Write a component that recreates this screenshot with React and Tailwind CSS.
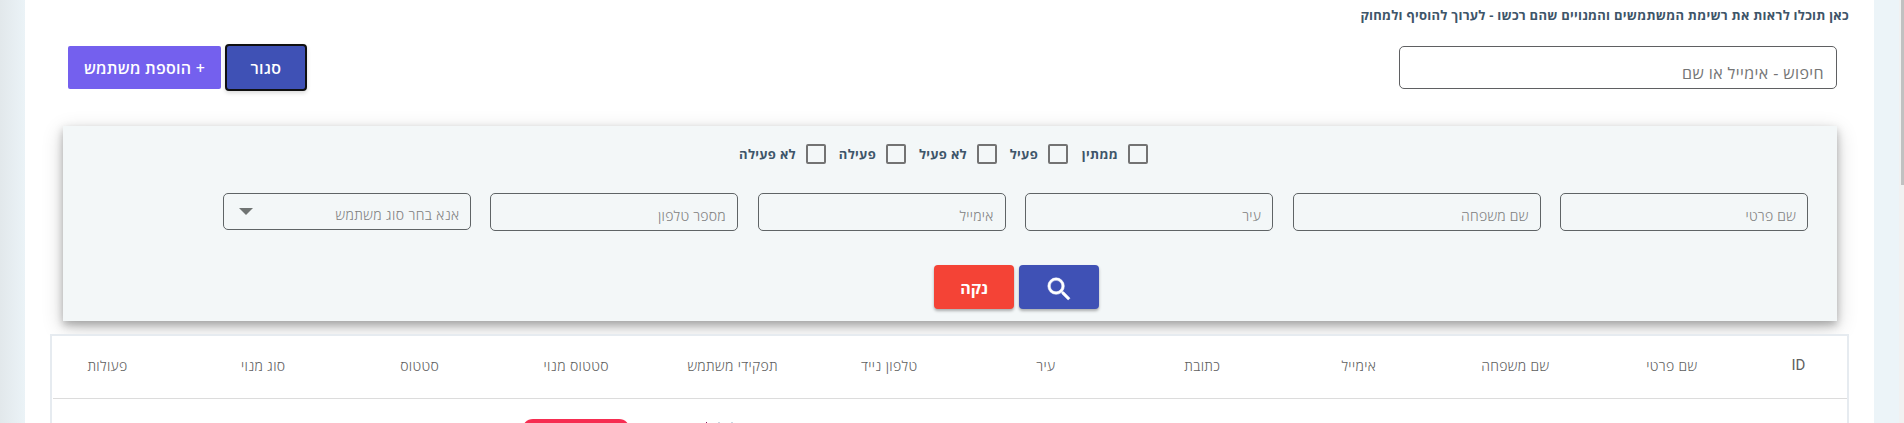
const statuses = [
  { label: 'ממתין', width: 'w-[37px]', gap: 'ml-[13px]' },
  { label: 'פעיל', width: 'w-[28px]', gap: 'ml-[13px]' },
  { label: 'לא פעיל', width: 'w-[48px]', gap: 'ml-[13px]' },
  { label: 'פעילה', width: 'w-[37px]', gap: 'ml-[13px]' },
  { label: 'לא פעילה', width: 'w-[57px]', gap: '' },
];

const fields = ['שם פרטי', 'שם משפחה', 'עיר', 'אימייל', 'מספר טלפון'];

const columns = [
  'שם פרטי',
  'שם משפחה',
  'אימייל',
  'כתובת',
  'עיר',
  'טלפון נייד',
  'תפקידי משתמש',
  'סטטוס מנוי',
  'סטטוס',
  'סוג מנוי',
];

function Toolbar() {
  return (
    <div className="mr-[12px] ml-[13px] mt-[18px] flex h-[47px] items-center justify-between">
      <input
        type="text"
        placeholder="חיפוש - אימייל או שם"
        className="h-[43px] w-[438px] rounded-[5px] border border-[#5f6062] bg-white px-[12px] pt-[10px] text-[16px] tracking-[0.4px] text-[#4b5563] outline-none placeholder:text-[#757575]"
      />
      <div className="ml-[5px] flex items-center gap-[4px]">
        <button className="h-[47px] w-[82px] rounded-[4px] border-2 border-[#101010] bg-[#3f51b5] text-[16px] font-semibold tracking-[0.4px] text-white shadow-[0_2px_4px_rgba(0,0,0,0.15)]">
          סגור
        </button>
        <button className="h-[43px] w-[153px] rounded-[2px] bg-[#7460ee] text-[16px] font-semibold tracking-[0.25px] whitespace-nowrap text-white">
          + הוספת משתמש
        </button>
      </div>
    </div>
  );
}

function Filters() {
  return (
    <section className="mr-[12px] ml-[13px] mt-[35px] h-[195px] bg-[#f3f7f8] pt-[18px] shadow-[0_4px_8px_rgba(0,0,0,0.26),0_6px_20px_rgba(0,0,0,0.19)]">
      <div className="mr-[689px] flex h-[20px] items-center">
        {statuses.map((s) => (
          <label key={s.label} className={`flex items-center gap-[10px] ${s.gap}`}>
            <span className="h-[20px] w-[20px] shrink-0 rounded-[2px] border-2 border-[#737373]" />
            <span
              className={`text-[13px] leading-5 font-bold tracking-[0.3px] whitespace-nowrap text-[#3e5569] ${s.width}`}
            >
              {s.label}
            </span>
          </label>
        ))}
      </div>
      <div className="mr-[29px] mt-[29px] grid w-[1585.5px] grid-cols-6 items-start gap-x-[19.5px]">
        {fields.map((f) => (
          <input
            key={f}
            type="text"
            placeholder={f}
            className="h-[38px] w-full rounded-[5px] border border-[#5f6466] bg-transparent px-[11px] pt-[7px] text-[14px] font-light tracking-[0.25px] outline-none placeholder:text-[#808080]"
          />
        ))}
        <div className="flex h-[37px] items-center justify-between rounded-[5px] border border-[#5f6466] pr-[10px] pl-[15px]">
          <span className="pt-[5px] text-[14px] font-light tracking-[0.4px] text-[#808080]">
            אנא בחר סוג משתמש
          </span>
          <svg width="14" height="7" viewBox="0 0 14 7" fill="#707473">
            <path d="M0 0h14L7 7z" />
          </svg>
        </div>
      </div>
      <div className="mr-[738px] mt-[34px] flex gap-[5px]">
        <button className="flex h-[44px] w-[80px] items-center justify-center rounded-[4px] bg-[#3f51b5] pt-[5px] shadow-[0_2px_3px_rgba(0,0,0,0.3)]">
          <svg width="30.500" height="30.500" viewBox="0 0 24 24" fill="#fff" stroke="#fff" strokeWidth="0.4">
            <path d="M15.5 14h-.79l-.28-.27A6.471 6.471 0 0 0 16 9.500 6.500 6.500 0 1 0 9.500 16c1.610 0 3.090-.590 4.230-1.570l.27.280v.790l5 4.990L20.490 19l-4.990-5zm-6 0C7.010 14 5 11.990 5 9.500S7.010 5 9.500 5 14 7.010 14 9.500 11.990 14 9.500 14z" />
          </svg>
        </button>
        <button className="h-[44px] w-[80px] rounded-[4px] bg-[#f44336] pt-[2px] text-[16px] font-bold text-white shadow-[0_2px_3px_rgba(0,0,0,0.3)]">
          נקה
        </button>
      </div>
    </section>
  );
}

function UsersTable() {
  return (
    <section className="relative mt-[13px] h-[120px] overflow-hidden border-2 border-[#e6ebf0] bg-white">
      <div className="ml-px flex h-[63px] items-center border-b border-[#dcdcdc] pb-[3px] text-[14px] font-light tracking-[0.35px] text-[#606060]">
        <div className="w-[97px] text-center">
          <span className="font-['Roboto'] text-[15px] font-normal tracking-normal">ID</span>
        </div>
        {columns.map((c) => (
          <div key={c} className="w-[156.5px] shrink-0 text-center whitespace-nowrap">
            {c}
          </div>
        ))}
        <div className="flex-1 pr-[23px] text-center">פעולות</div>
      </div>
      <div className="mr-[1114px] mt-[20px] flex">
        <div className="mt-[3px] flex w-[27px] justify-between">
          <span className="h-px w-[2px] bg-[#c9d6e2]" />
          <span className="h-px w-[2px] bg-[#c9d6e2]" />
          <span className="h-px w-px bg-[#8b1a62]" />
        </div>
        <span className="mr-[76px] h-[22px] w-[108px] rounded-[11px] bg-[#f62d51]" />
      </div>
    </section>
  );
}

export default function App() {
  return (
    <div
      dir="rtl"
      className="flex h-[423px] w-[1904px] overflow-hidden bg-[#ecf4f8] font-['Open_Sans','Noto_Sans',sans-serif]"
    >
      <div className="flex w-[5px] shrink-0 justify-start bg-[#f1f1f1]">
        <div className="h-[185px] w-[3px] bg-[#c1c1c1]" />
      </div>
      <div className="w-[25px] shrink-0" />
      <main className="w-[1849px] shrink-0 bg-white px-[25px]">
        <h6 className="h-[26px] pt-[4px] text-[13px] leading-[22px] font-bold tracking-[0.25px] whitespace-nowrap text-[#3e5569]">
          כאן תוכלו לראות את רשימת המשתמשים והמנויים שהם רכשו - לערוך להוסיף ולמחוק
        </h6>
        <Toolbar />
        <Filters />
        <UsersTable />
      </main>
      <div className="w-[25px] shrink-0 bg-linear-to-r from-[#e2e8eb] to-[#ebf3f7]" />
    </div>
  );
}
